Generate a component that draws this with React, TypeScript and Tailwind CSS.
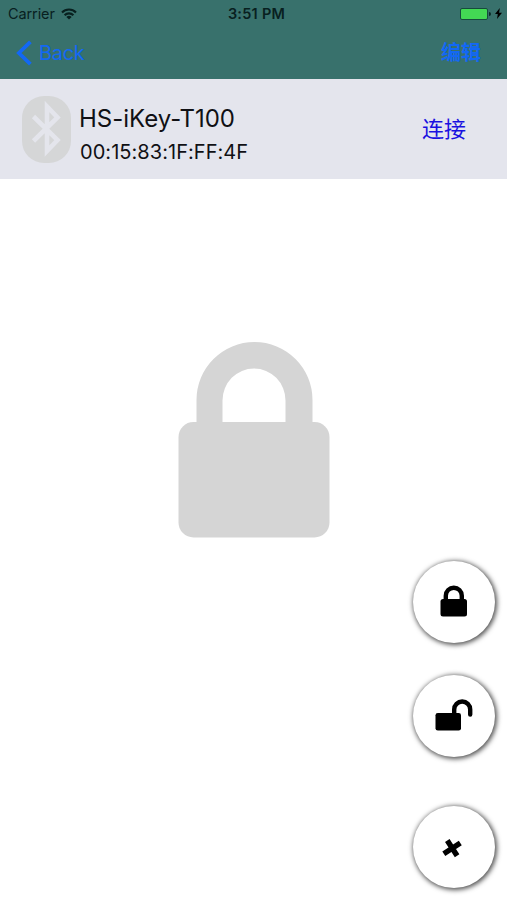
import type { ReactNode } from 'react'

function StatusBar() {
  return (
    <div className="grid h-[27px] grid-cols-3 items-center pl-2 pr-[5px] text-[#08201f]">
      <div className="flex items-center gap-[6px]">
        <span className="pt-px text-[14.5px] leading-none tracking-[-0.1px]">Carrier</span>
        <svg className="h-[12px] w-[16px]" viewBox="0 0 16 12" fill="none" stroke="currentColor" strokeWidth="2.1">
          <path d="M1 4.4a10 10 0 0 1 14 0" />
          <path d="M3.6 7.2a6.2 6.2 0 0 1 8.8 0" />
          <path d="M8 11.6 5.4 9a3.7 3.7 0 0 1 5.2 0Z" fill="currentColor" stroke="none" />
        </svg>
      </div>
      <span className="whitespace-nowrap pl-[3px] pt-[2px] text-center text-[14.5px] font-semibold leading-none tracking-[0.25px]">
        3:51 PM
      </span>
      <div className="flex items-center justify-end">
        <div className="h-[12px] w-[28px] rounded-[2px] border border-[#164b3c] bg-[#43d854]" />
        <div className="ml-px h-[4px] w-[2px] rounded-r-full bg-[#0b2b28]" />
        <svg className="ml-[4px] h-[11px] w-[7px]" viewBox="0 0 7 11" fill="black">
          <path d="M4.8 0 0 6.1h2.8L2 11l5-6.3H4.1Z" />
        </svg>
      </div>
    </div>
  )
}

function NavBar() {
  return (
    <div className="flex h-[52px] items-start justify-between pl-[16px] pr-[26px] text-[#1268f5]">
      <button className="flex h-[51px] items-center gap-[7px]">
        <svg className="h-[26px] w-[16px]" viewBox="0 0 16 26" fill="none" stroke="currentColor" strokeWidth="3.8">
          <path d="M14.4 1.8 2.9 13l11.5 11.2" />
        </svg>
        <span className="text-[20px] leading-none tracking-[-0.3px]">Back</span>
      </button>
      <button className="h-[52px] text-[20px] font-bold leading-none">编辑</button>
    </div>
  )
}

function BluetoothIcon() {
  return (
    <svg className="h-[67px] w-[49px]" viewBox="0 0 49 67">
      <rect width="49" height="67" rx="22" ry="22" fill="#d5d6d7" />
      <path
        d="M11.5 20.5 35.5 44 25 55V10.5L35.5 21.500 11.5 45"
        fill="none"
        stroke="#e4e5ec"
        strokeWidth="4.6"
      />
    </svg>
  )
}

function DeviceRow() {
  return (
    <div className="flex h-[100px] shrink-0 items-start bg-[#e4e5ed] pl-[22px] pr-[41px] pt-[17px]">
      <BluetoothIcon />
      <div className="ml-[8px] flex flex-1 flex-col text-[#101014]">
        <span className="mt-[9px] text-[24px] leading-[28px] tracking-[-0.02px]">HS-iKey-T100</span>
        <span className="ml-px mt-[6px] text-[20px] leading-[26px] tracking-[0.05px]">00:15:83:1F:FF:4F</span>
      </div>
      <button className="mt-[17px] text-[22px] leading-[32px] text-[#1a10e0]">连接</button>
    </div>
  )
}

function BigLock() {
  return (
    <svg className="mt-[162px] h-[197px] w-[152px] shrink-0" viewBox="0 0 152 197" fill="#d5d5d5">
      <path d="M18.5 82V59a58 58 0 0 1 116 0v23h-27V59.5a31.5 32 0 0 0-63 0V82Z" />
      <rect x="0.5" y="81" width="151" height="115.5" rx="15" />
    </svg>
  )
}

function RoundButton({ label, className, children }: { label: string; className: string; children: ReactNode }) {
  return (
    <button
      aria-label={label}
      className={`flex size-[82px] shrink-0 items-center justify-center self-end rounded-full bg-white shadow-[1px_1px_5px_1px_rgba(0,0,0,0.7)] ${className}`}
    >
      <svg className="size-[82px]" viewBox="0 0 82 82">
        {children}
      </svg>
    </button>
  )
}

export default function App() {
  return (
    <div className="flex h-screen flex-col overflow-hidden bg-white font-['Inter','Noto_Sans_CJK_SC',sans-serif]">
      <header className="h-[79px] shrink-0 bg-[#38716c]">
        <StatusBar />
        <NavBar />
      </header>
      <DeviceRow />
      <main className="flex flex-1 flex-col items-center pr-[12px]">
        <div className="pl-[13px]">
          <BigLock />
        </div>
        <RoundButton label="Lock" className="mt-[23px]">
          <path d="M32.8 40v-5.300a8 8 0 0 1 16 0V40" fill="none" stroke="black" strokeWidth="4.4" />
          <rect x="27.5" y="38" width="26.5" height="17.5" rx="2.5" />
        </RoundButton>
        <RoundButton label="Unlock" className="mt-[32px]">
          <path
            d="M41.2 42v-7.5a8 8 0 0 1 16 0v5"
            fill="none"
            stroke="black"
            strokeWidth="4.4"
            strokeLinecap="round"
          />
          <rect x="22.5" y="38" width="25.5" height="17.5" rx="2.3" />
        </RoundButton>
        <RoundButton label="Close" className="mt-[49px]">
          <path d="m34.3 34.5 9.800 15.300M47.300 37 30.800 47.800" stroke="black" strokeWidth="5.4" />
        </RoundButton>
      </main>
    </div>
  )
}
